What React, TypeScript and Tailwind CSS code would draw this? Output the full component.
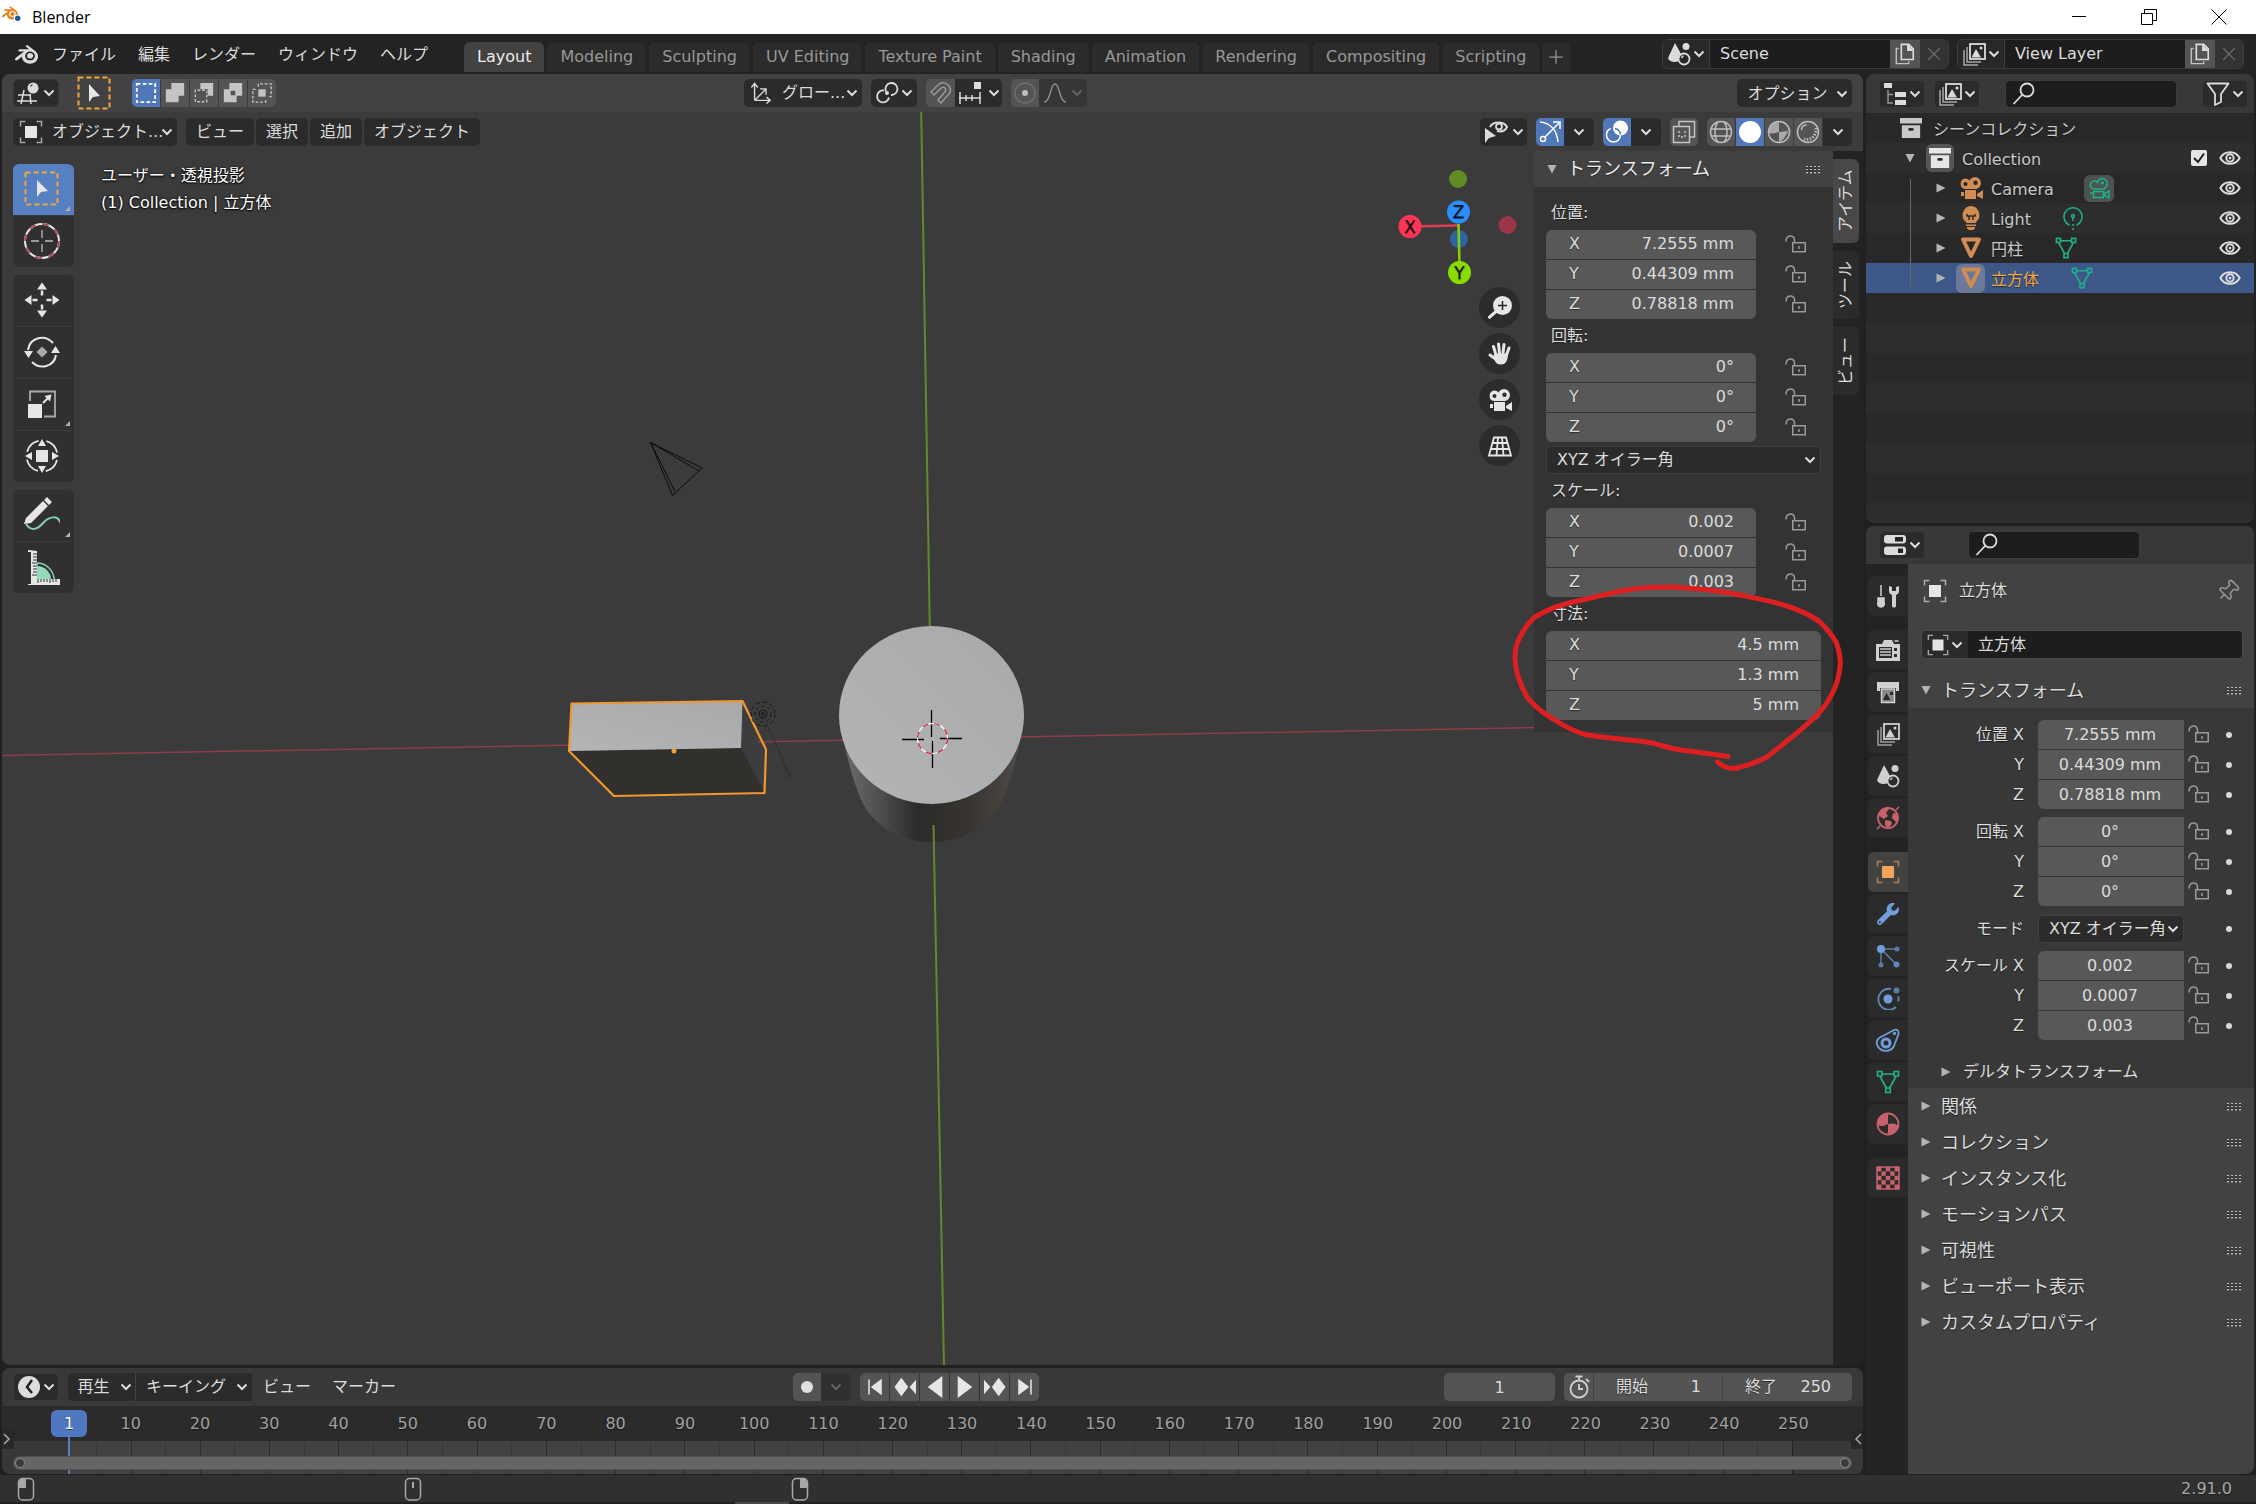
import React from 'react';
import { Pin } from 'lucide-react';
import { FaWrench } from 'react-icons/fa';
import { SiBlender } from 'react-icons/si';

type IconProps = { className?: string; children?: React.ReactNode };

const Icon: React.FC<IconProps> = ({ className = 'size-6', children }) => (
  <svg viewBox="0 0 24 24" className={`${className} shrink-0`} fill="none" stroke="currentColor" strokeWidth="1.5" aria-hidden="true">
    {children}
  </svg>
);

const ToolIcon: React.FC<IconProps> = ({ children }) => (
  <svg viewBox="0 0 36 36" className="size-9" fill="none" stroke="#e6e6e6" strokeWidth="2" aria-hidden="true">
    {children}
  </svg>
);

const Chevron = ({ className = '' }: { className?: string }) => (
  <svg viewBox="0 0 12 8" className={`w-3 h-2 shrink-0 ${className}`} fill="none" stroke="currentColor" strokeWidth="2" aria-hidden="true">
    <path d="M1.5 1.5 6 6l4.5-4.5" />
  </svg>
);

const Grip = () => (
  <svg viewBox="0 0 16 9" className="w-4 h-[9px] shrink-0" aria-hidden="true">
    {[0, 1, 2, 3].map((i) => (
      <g key={i}>
        <rect x={i * 4 + 1} y="1" width="2" height="1.4" fill="#c0c0c0" />
        <rect x={i * 4 + 1} y="2.4" width="2" height="1" fill="#161616" />
        <rect x={i * 4 + 1} y="4" width="2" height="1.4" fill="#c0c0c0" />
        <rect x={i * 4 + 1} y="5.4" width="2" height="1" fill="#161616" />
        <rect x={i * 4 + 1} y="7" width="2" height="1.4" fill="#c0c0c0" />
      </g>
    ))}
  </svg>
);

const Triangle = ({ open = false }: { open?: boolean }) => (
  <svg viewBox="0 0 10 10" className="size-2.5 shrink-0" fill="#b4b4b4" aria-hidden="true">
    {open ? <path d="M.5 1h9L5 9.5z" /> : <path d="M.5.5v9L9.5 5z" />}
  </svg>
);

const Lock = () => (
  <svg viewBox="0 0 22 18" className="w-[22px] h-[18px]" fill="none" stroke="#9a9a9a" strokeWidth="1.5" aria-hidden="true">
    <path d="M1 6.500C1-.5 9.500-.5 9.500 5v3" />
    <rect x="7.750" y="7.750" width="12.500" height="9" />
    <path d="M14 11v3" />
  </svg>
);

const EditorIcon = () => (
  <Icon>
    <path d="M1 14h13M0 20h20M7 9 4 23M13 13l1 10" />
    <circle cx="16" cy="7" r="5.500" fill="currentColor" stroke="none" />
    <path d="M13.500 5.500a3 3 0 0 1 2-2" stroke="#2b2b2b" strokeWidth="1.300" />
  </Icon>
);

const ObjectIcon = ({ fill = '#e6e6e6', className = 'size-6' }: { fill?: string; className?: string }) => (
  <Icon className={className}>
    <rect x="6" y="6" width="12" height="12" fill={fill} stroke="none" />
    <path d="M1.500 6.500v-5h5M17.500 1.500h5v5M22.500 17.500v5h-5M6.500 22.500h-5v-5" opacity=".7" />
  </Icon>
);

const SceneIcon = () => (
  <Icon>
    <path d="M8 1 14 12c-2 2-3 4-2 7-4 2-10 1-11-3z" fill="currentColor" stroke="none" />
    <circle cx="19" cy="4.500" r="3.500" fill="currentColor" stroke="none" />
    <circle cx="17" cy="17" r="5.500" strokeWidth="1.800" />
    <path d="M14.500 16a3 3 0 0 1 2-2" />
  </Icon>
);

const LayersIcon = () => (
  <Icon>
    <rect x="8" y="2" width="15" height="15" strokeWidth="1.800" />
    <path d="M9.500 15.500 14 7l5 8.500z" fill="currentColor" stroke="none" />
    <circle cx="19" cy="6" r="1.500" fill="currentColor" stroke="none" />
    <path d="M5 5v15h14M2 8v15h14" opacity=".7" />
  </Icon>
);

const SearchIcon = () => (
  <Icon className="size-6">
    <circle cx="15" cy="8" r="6.500" strokeWidth="1.800" />
    <path d="m10.500 12.500-9 9.500" strokeWidth="1.800" />
  </Icon>
);

const NewIcon = () => (
  <Icon className="size-[22px]">
    <path d="M8 1.500h8l5 5V18H8z" strokeWidth="1.800" />
    <path d="M15 1.500V8h6" fill="currentColor" />
    <path d="M5 6H2.500v16.500H16V20" opacity=".8" />
  </Icon>
);

const BoxIcon = () => (
  <Icon className="size-[22px]">
    <path d="M0 1h24v6H0zM2 9h20v14H2z" fill="currentColor" stroke="none" />
    <rect x="9" y="12" width="6" height="3" rx="1.500" fill="#2b2b2b" stroke="none" />
  </Icon>
);

const CameraIcon = ({ className = 'size-6' }: { className?: string }) => (
  <Icon className={className}>
    <path fillRule="evenodd" stroke="none" fill="currentColor" d="M6.500 2.500a5 5 0 0 1 4 2 6 6 0 1 1 6.500 8.500H6a5.300 5.300 0 0 1 .5-10.500zM6.500 6a2 2 0 1 0 0 4 2 2 0 0 0 0-4zM16.500 4.500a2.200 2.200 0 1 0 0 4.400 2.200 2.200 0 0 0 0-4.400z" />
    <path d="M6 14h11v9H6zM18 18l6-4v9l-6-3zM2 16h3v4H2z" fill="currentColor" stroke="none" />
  </Icon>
);

const CameraDataIcon = () => (
  <Icon>
    <path d="M7 13a4 4 0 1 1 3.500-6.500 5 5 0 1 1 8 5L17 13zM6.500 15.500h10v6h-10zM17 18l5-3v7l-5-3M3 17h3" />
    <circle cx="15.500" cy="7" r=".8" />
  </Icon>
);

const MeshIcon = () => (
  <Icon>
    <path d="M4 3.500h16L12 20z" strokeWidth="4" strokeLinejoin="round" />
  </Icon>
);

const MeshDataIcon = ({ className = 'size-6' }: { className?: string }) => (
  <Icon className={className}>
    <path d="M6 4h12M4 6.500 10.500 18M20 6.500 13.500 18" strokeWidth="1.700" />
    <path d="M1.500 1.500H6v4.500H1.500zM18 1.500h4.500V6H18zM9.750 18h4.500v4.500h-4.500z" strokeWidth="1.700" />
  </Icon>
);

const EyeIcon = () => (
  <Icon className="size-[22px]">
    <path d="M1.500 12C6 3.500 18 3.500 22.500 12 18 20.500 6 20.500 1.500 12z" strokeWidth="2.200" />
    <circle cx="12" cy="12" r="4" strokeWidth="2.200" />
    <circle cx="12" cy="12" r="1.500" fill="currentColor" stroke="none" />
  </Icon>
);

const btn = 'flex items-center justify-center bg-[#2b2b2b] h-7 rounded-[5px] text-[#dcdcdc]';

const IconMenu = ({ label, children }: { label: string; children: React.ReactNode }) => (
  <button type="button" aria-label={label} className={`${btn} w-[46px] gap-0.5 border border-[#383838]`}>
    {children}
    <Chevron />
  </button>
);

const SelectBox = ({ label, value, className }: { label: string; value: string; className: string }) => (
  <div className="relative flex items-center">
    <select aria-label={label} defaultValue={value} className={`appearance-none h-full outline-none bg-transparent ${className}`}>
      <option>{value}</option>
    </select>
    <Chevron className="absolute right-1 pointer-events-none" />
  </div>
);

const menus = ['ファイル', '編集', 'レンダー', 'ウィンドウ', 'ヘルプ'];
const workspaces = ['Layout', 'Modeling', 'Sculpting', 'UV Editing', 'Texture Paint', 'Shading', 'Animation', 'Rendering', 'Compositing', 'Scripting'];

const TitleBar = () => (
  <header className="flex items-center h-[34px] bg-white text-black [text-shadow:none]">
    <svg viewBox="0 0 24 24" className="size-6 ml-0.5" aria-hidden="true">
      <SiBlender width="24" height="24" color="#e8811a" />
      <circle cx="15.700" cy="13.300" r="3.900" fill="#fff" />
      <circle cx="15.700" cy="13.300" r="2.700" fill="#1d5a9c" />
    </svg>
    <span className="ml-1.5 text-base font-['Open_Sans',sans-serif]">Blender</span>
    <div className="ml-auto flex items-center pr-0.5">
      <button type="button" aria-label="最小化" className="w-[70px] flex justify-center">
        <svg viewBox="0 0 16 16" className="size-4" stroke="#000" fill="none"><path d="M1 7.500h14" /></svg>
      </button>
      <button type="button" aria-label="元に戻す" className="w-[70px] flex justify-center">
        <svg viewBox="0 0 16 16" className="size-4" stroke="#000" fill="none"><path d="M.5 4.500h11v11H.5zM3.500 4V.5h12v11H12" /></svg>
      </button>
      <button type="button" aria-label="閉じる" className="w-[70px] flex justify-center">
        <svg viewBox="0 0 16 16" className="size-4" stroke="#000" fill="none"><path d="m.5.5 15 15M15.500.5l-15 15" /></svg>
      </button>
    </div>
  </header>
);

const DataBlock = ({ name, icon }: { name: string; icon: React.ReactNode }) => (
  <div className="flex h-[30px] w-[287px] rounded-md border border-[#3d3d3d] overflow-hidden text-[#dcdcdc]">
    <button type="button" aria-label={`${name} 選択`} className="w-[46px] flex items-center justify-center gap-0.5 bg-[#282828]">
      {icon}
      <Chevron />
    </button>
    <input aria-label={name} defaultValue={name} className="flex-1 min-w-0 bg-[#1d1d1d] border-l border-[#3d3d3d] pl-2.5 outline-none" />
    <button type="button" aria-label="新規" className="w-[30px] flex items-center justify-center bg-[#545454]"><NewIcon /></button>
    <button type="button" aria-label="削除" className="w-7 flex items-center justify-center bg-[#333] text-[#707070]">
      <Icon className="size-5"><path d="m5 5 14 14M19 5 5 19" /></Icon>
    </button>
  </div>
);

const TopBar = () => (
  <div className="flex h-10 bg-[#232323] pl-[15px] pr-3">
    <div className="flex items-center h-10">
      <SiBlender className="size-[23px] text-[#dcdcdc]" />
      <nav className="flex gap-[22px] ml-3.5 pt-0.5">
        {menus.map((m) => <button type="button" key={m}>{m}</button>)}
      </nav>
    </div>
    <div className="flex gap-[3px] items-end pb-0.5 ml-9">
      {workspaces.map((w, i) => (
        <button
          type="button"
          key={w}
          className={`h-[30px] px-[13px] rounded-t-md ${i === 0 ? 'bg-[#424242] text-[#ececec]' : 'bg-[#2b2b2b] text-[#989898]'}`}
        >
          {w}
        </button>
      ))}
      <button type="button" aria-label="追加" className="h-[30px] w-7 flex items-center justify-center rounded-t-md bg-[#2b2b2b] text-[#989898]">
        <Icon className="size-5"><path d="M12 4v16M4 12h16" /></Icon>
      </button>
    </div>
    <div className="ml-auto flex gap-2 pt-[5px]">
      <DataBlock name="Scene" icon={<SceneIcon />} />
      <DataBlock name="View Layer" icon={<LayersIcon />} />
    </div>
  </div>
);

const selectModes = [
  <rect x="2" y="2" width="20" height="20" strokeDasharray="4 2.500" key="a" strokeWidth="2" />,
  <path d="M8 1h14v14h-6v7H2V8h6z" fill="#c4c4c4" stroke="none" key="b" />,
  <g key="c"><path d="M8 1h14v14h-6V8H8z" fill="#c4c4c4" stroke="none" /><path d="M13 9H2.500v12.500H15V10" strokeDasharray="3 2" /></g>,
  <path key="d" d="M8 1h14v14h-6v7H2V8h6zM9.500 9.500v5h5v-5z" fillRule="evenodd" fill="#c4c4c4" stroke="none" />,
  <g key="e"><rect x="8" y="8" width="8" height="8" fill="#c4c4c4" stroke="none" /><path d="M8 5V2h14v14h-3M5 8H2v14h14v-3" strokeDasharray="3 2" /></g>,
];

const ToolHeader = () => (
  <div className="relative flex h-[38px] items-center bg-[#424242] pl-[11px] pr-[11px]">
    <IconMenu label="エディタータイプ"><EditorIcon /></IconMenu>
    <svg viewBox="0 0 34 34" className="size-[34px] ml-[18px]" fill="none" aria-hidden="true">
      <rect x="1.500" y="1.500" width="31" height="31" stroke="#f0a63c" strokeWidth="2" strokeDasharray="5 3" />
      <path d="M12 8v18l4-5 7-1z" fill="#e6e6e6" />
    </svg>
    <div className="flex gap-px ml-[21px] h-7 rounded-[5px] overflow-hidden bg-[#3a3a3a] text-[#c4c4c4]">
      {selectModes.map((m, i) => (
        <button type="button" key={i} aria-label={`選択モード ${i + 1}`} className={`w-7 flex items-center justify-center ${i === 0 ? 'bg-[#5078b8] text-white' : 'bg-[#545454]'}`}>
          <Icon className="size-[22px]">{m}</Icon>
        </button>
      ))}
    </div>
    <div className="grow-18" />
    <div className="flex gap-[9px] h-7">
      <div className="flex items-center rounded-[5px] bg-[#2b2b2b] pl-1.5">
        <Icon className="size-[22px]"><path d="M5 20V2M1.500 6 5 1.500 8.500 6M5 20h17M18 16.500l4 3.500-4 3.500M6 19 17 8M11 7.500h6.500V14" /></Icon>
        <SelectBox label="座標系" value="グロー..." className="w-[90px] pl-2.5" />
      </div>
      <button type="button" aria-label="ピボットポイント" className={`${btn} w-[46px] gap-0.5`}>
        <Icon>
          <path d="M9 9.500a6 6 0 1 0 5 7M11 10.500a6 6 0 1 1 5 3.500" strokeWidth="1.800" />
          <circle cx="12" cy="12" r="2" fill="currentColor" stroke="none" />
        </Icon>
        <Chevron />
      </button>
      <div className="flex rounded-[5px] overflow-hidden">
        <button type="button" aria-label="スナップ" className="w-[29px] bg-[#545454] text-[#999] flex items-center justify-center">
          <Icon><path d="m2 11 7-7c4-4 9-2 11 1s2 7-2 10l-6 7-3-3 6-7c2-2 2-4 1-5s-3-1-5 1l-6 6z" /></Icon>
        </button>
        <button type="button" aria-label="スナップ先" className="w-[47px] bg-[#2b2b2b] flex items-center justify-center gap-1.5">
          <Icon><path d="M1 17h22M2 11v12M8 14v6M14 14v6M22 11v12" /><path d="M16 1h7v7h-7z" fill="currentColor" stroke="none" /></Icon>
          <Chevron />
        </button>
      </div>
      <div className="flex rounded-[5px] overflow-hidden">
        <button type="button" aria-label="プロポーショナル編集" className="w-7 bg-[#545454] flex items-center justify-center">
          <Icon><circle cx="12" cy="12" r="10" stroke="#6e6e6e" /><circle cx="12" cy="12" r="3" fill="#bcbcbc" stroke="none" /></Icon>
        </button>
        <button type="button" aria-label="減衰" className="w-12 bg-[#363636] text-[#8c8c8c] flex items-center justify-center gap-1">
          <Icon><path d="M1 21c7 0 6-18 11-18s4 18 11 18" /></Icon>
          <Chevron className="opacity-50" />
        </button>
      </div>
    </div>
    <div className="grow-25" />
    <button type="button" className={`${btn} w-[115px] gap-2 pl-1.5 pt-px`}>オプション<Chevron /></button>
  </div>
);

const shadings = [
  <g key="w"><circle cx="12" cy="12" r="10.500" /><path d="M2 9h20M2 16h20M9 2c-4 5-4 15 0 20M15 2c4 5 4 15 0 20" /></g>,
  <circle key="s" cx="12" cy="12" r="11" fill="#fff" stroke="none" />,
  <g key="m"><circle cx="12" cy="12" r="10.500" /><path d="M12 12V2A10 10 0 0 0 2 13c3 1 7 0 10-1zM12 12l9-1c-2 6-6 10-9 11z" fill="#bdbdbd" stroke="none" opacity=".8" /></g>,
  <g key="r"><circle cx="12" cy="12" r="10.500" /><path d="M5.500 10c0-3 2-5 5-5" /><path d="M20 8c1 7-5 13-12 11" strokeWidth="3" strokeDasharray="1.500 1.500" /></g>,
];

const ViewHeader = () => (
  <div className="relative flex h-[39px] items-start pt-1.5 px-[11px]">
    <div className={`${btn} pl-1.5 w-[164px]`}>
      <ObjectIcon />
      <SelectBox label="モード" value="オブジェクト..." className="w-[134px] pl-[9px]" />
    </div>
    <div className="flex gap-0.5 ml-[9px]">
      {['ビュー', '選択', '追加', 'オブジェクト'].map((m) => (
        <button type="button" key={m} className={`${btn} px-[10px]`}>{m}</button>
      ))}
    </div>
    <div className="ml-auto flex gap-[9px] h-7">
      <button type="button" aria-label="オブジェクトの表示" className={`${btn} w-[47px] gap-1`}>
        <Icon>
          <path d="M6 7c3-6 14-6 17 0-2 4-6 5-10 4" strokeWidth="2" />
          <circle cx="15" cy="6.500" r="3" strokeWidth="1.800" />
          <path d="M1 8v15l4-5 7-2z" fill="currentColor" stroke="none" />
        </Icon>
        <Chevron />
      </button>
      <div className="flex rounded-[5px] overflow-hidden">
        <button type="button" aria-label="ギズモ" className="w-7 bg-[#5078b8] text-white flex items-center justify-center">
          <Icon><path d="M2 2c11 1 17 9 18 20M7 17 21 3M15 2h7v7" /><circle cx="5" cy="19" r="2.500" /></Icon>
        </button>
        <button type="button" aria-label="ギズモ設定" className="w-[30px] bg-[#2b2b2b] flex items-center justify-center"><Chevron /></button>
      </div>
      <div className="flex rounded-[5px] overflow-hidden">
        <button type="button" aria-label="オーバーレイ" className="w-7 bg-[#5078b8] text-white flex items-center justify-center">
          <Icon><circle cx="15.500" cy="8" r="7.500" fill="currentColor" stroke="none" /><circle cx="8.500" cy="15" r="7" strokeDasharray="30 3" /><path d="M10 8.500a7 7 0 0 1 5.500 6" stroke="#5078b8" /></Icon>
        </button>
        <button type="button" aria-label="オーバーレイ設定" className="w-[30px] bg-[#2b2b2b] flex items-center justify-center"><Chevron /></button>
      </div>
      <button type="button" aria-label="透過表示" className="w-7 rounded-[5px] bg-[#545454] text-[#c4c4c4] flex items-center justify-center">
        <Icon><path d="M1.500 6.500h16v16h-16zM7 6V1.500h15.500V17H18" /><path d="M7 11v6h6v-6" strokeDasharray="2 2" /></Icon>
      </button>
      <div className="flex gap-px rounded-[5px] overflow-hidden bg-[#3a3a3a]">
        {shadings.map((s, i) => (
          <button type="button" key={i} aria-label={`シェーディング ${i + 1}`} className={`w-7 flex items-center justify-center text-[#bdbdbd] ${i === 1 ? 'bg-[#5078b8]' : 'bg-[#545454]'}`}>
            <Icon>{s}</Icon>
          </button>
        ))}
        <button type="button" aria-label="シェーディング設定" className="w-[29px] bg-[#2b2b2b] flex items-center justify-center"><Chevron /></button>
      </div>
    </div>
  </div>
);

// 3D scene, drawn in window coordinates and shifted to the viewport origin
const Scene3D = () => (
  <svg className="absolute inset-0 size-full" fill="none" aria-hidden="true">
    <defs>
      <linearGradient id="side" x1="0" x2="1">
        <stop offset="0" stopColor="#6c6c6c" />
        <stop offset=".2" stopColor="#505050" />
        <stop offset=".42" stopColor="#2c2b2a" />
        <stop offset=".7" stopColor="#37342f" />
        <stop offset="1" stopColor="#504a47" />
      </linearGradient>
      <linearGradient id="top" x1="0" y1="1" x2="1" y2="0">
        <stop offset="0" stopColor="#b2b4b6" />
        <stop offset="1" stopColor="#a8a9ab" />
      </linearGradient>
    </defs>
    <g transform="translate(-2 -74)">
      <path d="M0 755.500 1540 727.500" stroke="#8c3c4a" strokeWidth="1.500" />
      <path d="M921 100 930 640" stroke="#62892f" strokeWidth="2" />
      <g stroke="#0c0c0c">
        <path d="M650.500 442.500 702 468 672.500 495.500zM650.500 442.500 699 471M650.500 442.500 675 491.500" />
      </g>
      <g>
        <path d="m742.500 701-2 47 24 45 1.500-43.500z" fill="#3d3c3e" />
        <path d="m569 751 172-3 24 45-151 3z" fill="#32302c" />
        <path d="m571.500 704 171-3-1.500 47-172 3z" fill="url(#top)" />
        <path d="m758 741.700 8 0" stroke="#8c3c4a" strokeWidth="1.500" />
        <path d="m571.500 703.500 171-2.500 23.500 48.500-1.500 43.500-150.500 3-45-45z" stroke="#f0982f" strokeWidth="2.200" strokeLinejoin="round" />
        <circle cx="674" cy="751" r="2.500" fill="#f0a030" />
      </g>
      <g stroke="#151515">
        <circle cx="763" cy="714" r="4" />
        <circle cx="763" cy="714" r="1.500" />
        <circle cx="763" cy="714" r="8" strokeDasharray="3 3" />
        <circle cx="763" cy="714" r="12" strokeDasharray="4 3" />
        <path d="m768 727 22 49" stroke="#2c2c2c" />
        <circle cx="790" cy="776" r="1" stroke="#2c2c2c" />
      </g>
      <path d="M843 736C847 758 852 776 858 792 868 823 898 842 932 842S995 822 1006 792C1012 776 1017 758 1021 736z" fill="url(#side)" />
      <ellipse cx="931.500" cy="715" rx="92.500" ry="89" fill="url(#top)" />
      <path d="M933.500 825 944 1366" stroke="#62892f" strokeWidth="2" />
      <path d="M931.500 710v27M932.500 741v27M902 739.500h22M940 738.500h22" stroke="#000" strokeWidth="1.300" />
      <circle cx="932.500" cy="738.500" r="15" stroke="#fff" strokeWidth="1.300" />
      <circle cx="932.500" cy="738.500" r="15" stroke="#d3223f" strokeWidth="1.300" strokeDasharray="6 6" />
    </g>
  </svg>
);

const tri = 'M34 29v5h-5z';
const toolGroups = [
  [
    <ToolIcon key="select"><rect x="1.500" y="1.500" width="32" height="32" stroke="#f0a63c" strokeDasharray="5 3.200" /><path d="M13 9v17l4-5 7-1z" fill="#e6e6e6" stroke="none" /></ToolIcon>,
    <ToolIcon key="cursor"><circle cx="18" cy="18" r="17" /><circle cx="18" cy="18" r="17" stroke="#a8505a" strokeDasharray="6.700 6.600" /><path d="M18 7v8M18 21v8M7 18h8M21 18h8" stroke="#bbb" strokeWidth="1.300" /></ToolIcon>,
  ],
  [
    <ToolIcon key="move"><path d="M18 .500l5 7H13zM18 35.500l5-7H13zM.500 18l7-5v10zM35.500 18l-7-5v10z" fill="#e6e6e6" stroke="none" /><path d="M18 8.500v5M18 22.500v5M8.500 18h5M22.500 18h5" strokeWidth="2.500" /></ToolIcon>,
    <ToolIcon key="rotate"><path d="M4 16C6 3 21 0 29 9M32 21C30 33 16 36 8 28" /><path d="M0 17h9l-4.500 7zM27 19h9l-4.500-7z" fill="#e6e6e6" stroke="none" /><path d="m18 12.500 5.500 5.500-5.500 5.500-5.500-5.500z" fill="#aaa" stroke="none" /></ToolIcon>,
    <ToolIcon key="scale"><path d="M6 15V5.500h25v25H20" stroke="#aaa" strokeWidth="1.800" /><path d="M4 18h14v14H4z" fill="#e6e6e6" stroke="none" /><path d="m19 17 6-6" /><path d="m27.500 8.500-1.500 7-5.500-5.500z" fill="#e6e6e6" stroke="none" /></ToolIcon>,
    <ToolIcon key="transform"><circle cx="18" cy="18" r="15.500" strokeDasharray="16.300 8.050" strokeDashoffset="-4" strokeWidth="1.800" /><path d="M12 12h12v12H12z" fill="#e6e6e6" stroke="none" /><path d="m18 1 4 7h-8zM18 35l4-7h-8zM1 18l7-4v8zM35 18l-7-4v8z" fill="#e6e6e6" stroke="none" /></ToolIcon>,
  ],
  [
    <ToolIcon key="annotate"><path d="M2 27c6 9 13 4 18-2 5-5 14-8 17 2" stroke="#84cfae" /><path d="m0 27 2-6L19 4l5 5L7 26zM20 3l3-3 5 5-3 3z" fill="#e6e6e6" stroke="none" /></ToolIcon>,
    <ToolIcon key="measure"><path d="M13 14a17 17 0 0 1 17 17H13z" stroke="#84cfae" strokeWidth="1.500" /><path d="M13 17a14 14 0 0 1 14 14H13z" fill="#94dab8" stroke="none" /><path d="M5 2h8v28h23v6H4v-1h3V3H4V1h9" fill="#e6e6e6" stroke="none" /><path d="M13 5h-4M13 8h-4M13 11h-4M13 14h-5M13 17h-4M13 20h-4M13 23h-4M13 26h-5M14 30v4M17 30v3M20 30v3M23 30v3M26 30v4M29 30v3M32 30v3" stroke="#303030" strokeWidth="1" /></ToolIcon>,
  ],
];
const toolNames = [['ボックス選択', 'カーソル'], ['移動', '回転', 'スケール', 'トランスフォーム'], ['アノテート', 'メジャー']];
const expandable = ['ボックス選択', 'スケール', 'アノテート'];

const Toolbar = () => (
  <div className="flex flex-col gap-2 pt-[13px] pl-[11px]">
    {toolGroups.map((g, gi) => (
      <div key={gi} className="flex flex-col gap-px w-[61px] rounded-md overflow-hidden">
        {g.map((t, i) => (
          <button
            type="button"
            key={i}
            aria-label={toolNames[gi][i]}
            className={`relative h-[51px] pr-[3px] pb-0.5 flex items-center justify-center ${gi === 0 && i === 0 ? 'bg-[#5680c2]' : 'bg-[#303030]'}`}
          >
            {t}
            {expandable.includes(toolNames[gi][i]) && (
              <svg viewBox="28 28 6 6" className="absolute right-1 bottom-1 size-1.5" fill="#b0b0b0"><path d={tri} /></svg>
            )}
          </button>
        ))}
      </div>
    ))}
  </div>
);

const Gizmo = () => (
  <svg viewBox="1396 166 124 121" className="w-[124px] h-[121px]" fill="none" fontSize="17" textAnchor="middle" aria-hidden="true">
    <circle cx="1458" cy="179" r="9" fill="#628b21" />
    <circle cx="1507.500" cy="225" r="9" fill="#9b3647" />
    <circle cx="1459" cy="239" r="9" fill="#2f65a0" />
    <path d="M1410 226.500 1459 225.500" stroke="#e23c55" strokeWidth="2.500" />
    <path d="M1458.500 224 1459.500 265" stroke="#85d00a" strokeWidth="2.500" />
    <circle cx="1458.500" cy="212" r="11.500" fill="#2c8fff" />
    <circle cx="1410" cy="226.500" r="11.500" fill="#ff3653" />
    <circle cx="1459.500" cy="272.500" r="11.500" fill="#8adb00" />
    <g fill="#111">
      <text x="1458.500" y="218">Z</text>
      <text x="1410" y="232.500">X</text>
      <text x="1459.500" y="278.500">Y</text>
    </g>
  </svg>
);

const navButtons = [
  { label: 'ズーム', icon: <Icon><circle cx="14.500" cy="9.500" r="9.500" fill="#e6e6e6" stroke="none" /><path d="m8.500 15-8 7" strokeWidth="3" /><path d="M14.500 5v9M10 9.500h9" stroke="#222" /></Icon> },
  { label: '移動', icon: <Icon><path d="M8 13 5.500 4.500M11.500 11 10.500 2M15 11l1-8.500M18.500 13 21 6M9 18l-7-5" strokeWidth="3" strokeLinecap="round" /><path d="m6.500 11.500 13.500 0c0 8-3 11-7 11-5 0-6-3-7.500-7z" fill="#e6e6e6" stroke="none" /></Icon> },
  { label: 'カメラ', icon: <CameraIcon /> },
  { label: '透視投影', icon: <Icon><path d="M6 3.500h12l5 18H1zM4.500 9h15M3 15h18M10 3.500 8.500 21M14 3.500 15.500 21" strokeWidth="1.800" /></Icon> },
];

const NumberStack = ({ title, values, unitWide = false }: { title: string; values: string[]; unitWide?: boolean }) => (
  <fieldset className="flex flex-col">
    <legend className="h-[34px] leading-[34px] pl-[5px]">{title}:</legend>
    <div className="flex justify-between pr-[3px]">
      <div className={`flex flex-col gap-px rounded-md overflow-hidden ${unitWide ? 'w-full' : 'w-[210px]'}`}>
        {values.map((v, i) => (
          <label key={i} className="flex items-center h-[29px] bg-[#585858] pl-[23px] pr-[22px] pb-0.5">
            {'XYZ'[i]}
            <input defaultValue={v} className="flex-1 min-w-0 text-right outline-none bg-transparent" />
          </label>
        ))}
      </div>
      {!unitWide && (
        <div className="flex flex-col gap-px mr-3.5">
          {values.map((_, i) => (
            <button type="button" key={i} aria-label={`${title} ${'XYZ'[i]} ロック`} className="h-[29px] pb-0.5 flex items-center"><Lock /></button>
          ))}
        </div>
      )}
    </div>
  </fieldset>
);

const SidePanel = () => (
  <aside className="w-[299px] shrink-0">
    <h2 className="flex items-center h-9 bg-[#424242] pl-[13px] pr-3 text-lg text-[#ececec]">
      <Triangle open />
      <span className="ml-2.5">トランスフォーム</span>
      <span className="ml-auto"><Grip /></span>
    </h2>
    <div className="bg-[#333] pl-3 pr-[9px] pt-[9px] pb-3">
      <NumberStack title="位置" values={['7.2555 mm', '0.44309 mm', '0.78818 mm']} />
      <NumberStack title="回転" values={['0°', '0°', '0°']} />
      <div className="flex h-7 mt-1 mr-[3px] rounded-[5px] bg-[#2b2b2b] border border-[#404040] [&>div]:w-full">
        <SelectBox label="回転モード" value="XYZ オイラー角" className="w-full pl-2.5" />
      </div>
      <NumberStack title="スケール" values={['0.002', '0.0007', '0.003']} />
      <NumberStack title="寸法" values={['4.5 mm', '1.3 mm', '5 mm']} unitWide />
    </div>
  </aside>
);

const SideTabs = () => (
  <div className="flex flex-col gap-2 w-[30px] shrink-0 bg-[#232323] pt-2 pr-1">
    {['アイテム', 'ツール', 'ビュー'].map((t, i) => (
      <button
        type="button"
        key={t}
        className={`[writing-mode:vertical-rl] rotate-180 rounded-l-md flex items-center justify-center text-[#dcdcdc] ${
          i === 0 ? 'h-[84px] bg-[#484848]' : 'h-[68px] bg-[#2b2b2b]'
        }`}
      >
        <span className="[text-orientation:sideways]">{t}</span>
      </button>
    ))}
  </div>
);

const Annotation = () => (
  <svg className="absolute right-0 top-0 w-[363px] h-[720px] pointer-events-none" viewBox="1500 74 363 720" fill="none" stroke="#dd1f22" strokeLinecap="round" strokeLinejoin="round" aria-hidden="true">
    <path strokeWidth="5" d="M1728 756.500C1712 754 1697 752 1680 750 1668 748 1659 744 1647 742 1626 739 1606 738 1587 735 1575 732 1564 726 1553 719 1543 713 1534 706 1527 697 1520 684 1515 672 1515 658 1515 650 1516 644 1520 637 1524 630 1528 622 1535 617 1548 609 1562 604 1577 601 1596 597 1614 592 1633 589 1646 587 1660 587 1673 587 1692 588 1711 590 1730 593 1749 597 1768 600 1787 606 1799 610 1811 615 1820 622 1827 629 1832 635 1836 642 1839 650 1841 659 1840 667 1839 676 1837 684 1833 692 1829 700 1824 708 1817 715 1801 731 1784 743 1767 757 1759 761 1750 765 1740 767 1734 770 1728 768 1723 766L1717.500 762" />
  </svg>
);

const Viewport = () => (
  <section className="relative flex-1 flex flex-col rounded-lg overflow-hidden bg-[#3b3b3b]">
    <Scene3D />
    <ToolHeader />
    <ViewHeader />
    <div className="relative flex-1 flex">
      <Toolbar />
      <div className="ml-[27px] pt-[11px] leading-[27px] text-white [text-shadow:0_0_2px_#000,0_1px_2px_#000]">
        <p>ユーザー・透視投影</p>
        <p>(1) Collection | 立方体</p>
      </div>
      <div className="ml-auto flex flex-col items-end gap-[5px] pt-[15px] pr-3.5">
        <div className="-mb-[5px]"><Gizmo /></div>
        {navButtons.map((n) => (
          <button type="button" key={n.label} aria-label={n.label} className="size-[41px] rounded-full bg-[#2c2c2c] text-[#e6e6e6] flex items-center justify-center">
            {n.icon}
          </button>
        ))}
      </div>
      <SidePanel />
      <SideTabs />
    </div>
    <Annotation />
  </section>
);

const transport = [
  'M4 2v20M20 3v18L8 12z',
  'M8 2l7.500 10L8 22 .500 12zM24 4v16l-7-8z',
  'M20 0v24L4 12z',
  'M4 0v24l16-12z',
  'M16 2l7.500 10L16 22l-7.500-10zM0 4v16l7-8z',
  'M20 2v20M4 3v18l12-9z',
];
const frames = Array.from({ length: 25 }, (_, i) => (i + 1) * 10);

const Timeline = () => (
  <section className="relative rounded-lg overflow-hidden bg-[#383838]">
    <div className="flex items-center h-[38px] px-[11px] bg-[#383838]">
      <IconMenu label="タイムライン">
        <Icon><circle cx="12" cy="12" r="11" fill="currentColor" stroke="none" /><path d="M15 5 10 12l5 6" stroke="#222" strokeWidth="2.500" /></Icon>
      </IconMenu>
      <div className="flex gap-px ml-[9px] h-7 rounded-l-[5px] overflow-hidden bg-[#444]">
        <button type="button" className="w-[67px] flex items-center justify-center gap-2.5 bg-[#2b2b2b] pl-1.5">再生<Chevron /></button>
        <button type="button" className="w-[116px] flex items-center justify-center gap-2.5 bg-[#2b2b2b] pl-1.5">キーイング<Chevron /></button>
      </div>
      <button type="button" className="ml-[11px]">ビュー</button>
      <button type="button" className="ml-[21px]">マーカー</button>
      <div className="flex-1" />
      <div className="flex h-7 rounded-[5px] overflow-hidden">
        <button type="button" aria-label="自動キー挿入" className="w-7 bg-[#545454] flex items-center justify-center"><span className="size-3 rounded-full bg-[#e0e0e0]" /></button>
        <button type="button" aria-label="自動キー設定" className="w-[30px] bg-[#303030] text-[#666] flex items-center justify-center"><Chevron /></button>
      </div>
      <div className="flex gap-px ml-[9px] mr-2 h-7 rounded-[5px] overflow-hidden bg-[#333]">
        {transport.map((d, i) => (
          <button type="button" key={i} aria-label={`再生操作 ${i + 1}`} className="w-[29px] bg-[#545454] flex items-center justify-center text-[#e6e6e6]">
            <Icon className={i === 0 || i === 5 ? 'size-[18px]' : 'size-[22px]'}><path d={d} fill="currentColor" stroke={i === 0 || i === 5 ? 'currentColor' : 'none'} strokeWidth="2" /></Icon>
          </button>
        ))}
      </div>
      <div className="flex-1" />
      <input aria-label="現在のフレーム" defaultValue="1" className="h-7 w-[111px] rounded-[5px] bg-[#545454] text-center outline-none" />
      <div className="flex gap-px ml-[9px] h-7 rounded-[5px] overflow-hidden bg-[#444]">
        <button type="button" aria-label="プレビュー範囲" className="w-[29px] bg-[#545454] text-[#d0d0d0] flex items-center justify-center">
          <Icon><circle cx="12" cy="14" r="8.500" strokeWidth="1.800" /><path d="M12 9v5h4M12 5V2M8.500 1.500h7M19 4l3 3" strokeWidth="1.800" /></Icon>
        </button>
        <label className="w-32 flex items-center bg-[#545454] pl-[22px] pr-[21px]">開始<input defaultValue="1" className="flex-1 min-w-0 text-right outline-none" /></label>
        <label className="w-[129px] flex items-center bg-[#545454] pl-[22px] pr-[21px]">終了<input defaultValue="250" className="flex-1 min-w-0 text-right outline-none" /></label>
      </div>
    </div>
    <div className="flex items-center h-[35px] bg-[#2b2b2b] pl-[94px] pr-[35px] text-[#a0a0a0]">
      {frames.map((f) => <span key={f} className="flex-1 text-center">{f}</span>)}
    </div>
    <div className="flex h-[33px] bg-[#383838] pl-[66px] pr-[70px]">
      <div className="w-7 bg-[#424242]" />
      {frames.map((f, i) => (
        <div key={f} className={`flex bg-[#424242] ${i === 24 ? 'grow basis-0 border-r border-[#222]' : 'grow-2 basis-0'}`}>
          <div className="flex-1 border-l border-[#3a3a3a]" />
          {i < 24 && <div className="flex-1 border-l border-[#2d2d2d]" />}
        </div>
      ))}
    </div>
    <div className="absolute left-[49px] top-[42px] flex flex-col items-center w-9">
      <span className="w-full h-[27px] leading-[27px] rounded-md bg-[#5078c0] text-center text-white">1</span>
      <span className="w-0.5 h-[37px] bg-[#5680c2]" />
    </div>
    <div className="absolute left-[11px] right-[11px] bottom-1 h-3.5 rounded-full bg-[#666] border border-[#505050] flex items-center justify-between px-px">
      <span className="size-2.5 rounded-full bg-[#3a3a3a] border border-[#888]" />
      <span className="size-2.5 rounded-full bg-[#3a3a3a] border border-[#888]" />
    </div>
    <svg viewBox="0 0 12 20" className="absolute left-0 top-[61px] w-3 h-5" fill="none"><rect width="12" height="20" fill="#282828" /><path d="m2 5 5 5-5 5" stroke="#aaa" strokeWidth="1.500" /></svg>
    <svg viewBox="0 0 12 20" className="absolute right-0 top-[61px] w-3 h-5" fill="none"><rect width="12" height="20" fill="#282828" /><path d="m10 5-5 5 5 5" stroke="#aaa" strokeWidth="1.500" /></svg>
  </section>
);

const sceneItems = [
  { name: 'Camera', icon: <CameraIcon />, data: <span className="ml-[30px] flex items-center justify-center w-[30px] h-[27px] rounded-md bg-[#4d5351]"><CameraDataIcon /></span> },
  {
    name: 'Light',
    icon: <Icon><path d="M12 0a9 9 0 0 1 5 16v1H7v-1a9 9 0 0 1 5-16zM7 18.500h10v1.500H7zM8 21h8v1.500l-2 1.500h-4l-2-1.500z" fill="currentColor" stroke="none" /><path d="M8 8v2h8V8M10 10v4M14 10v4" stroke="#2b2b2b" /></Icon>,
    data: <span className="ml-[30px]"><Icon><path d="M8.500 19a9 9 0 1 1 7 0M12 11v4M12 18v2M12 22v2" /><circle cx="12" cy="10" r="1.500" /></Icon></span>,
  },
  { name: '円柱', icon: <MeshIcon />, data: <span className="ml-8"><MeshDataIcon className="size-[22px]" /></span> },
  { name: '立方体', icon: <MeshIcon />, data: <span className="ml-8"><MeshDataIcon className="size-[22px]" /></span> },
];

const Outliner = () => (
  <section className="flex flex-col h-[449px] rounded-lg overflow-hidden bg-[#282828]">
    <div className="flex items-center h-[39px] pl-[13px] pr-1.5 bg-[#383838]">
      <IconMenu label="アウトライナー">
        <Icon><path d="M1 1h8v5H1zM12 10h11v5H12zM12 18h11v5H12z" fill="currentColor" stroke="none" /><path d="M5 8v13h5M5 12.500h5" opacity=".6" /></Icon>
      </IconMenu>
      <span className="ml-[9px]"><IconMenu label="表示モード"><LayersIcon /></IconMenu></span>
      <label className="ml-[25px] flex items-center w-[172px] h-7 rounded-[5px] bg-[#1d1d1d] border border-[#3d3d3d] pl-1.5">
        <SearchIcon />
        <input aria-label="検索" className="flex-1 min-w-0 outline-none" />
      </label>
      <span className="ml-auto">
        <IconMenu label="フィルター"><Icon><path d="M1.500 1.500h21L15 12v8l-6 3V12z" strokeWidth="1.800" strokeLinejoin="round" /></Icon></IconMenu>
      </span>
    </div>
    <ul className="relative text-[#c8c8c8]">
      <li className="flex items-center h-[30px] pl-[34px]"><BoxIcon /><span className="ml-[11px] pt-1">シーンコレクション</span></li>
      <li className="flex items-center h-[30px] pl-[39px] pr-[13px] bg-[#2d2d2d]">
        <Triangle open />
        <span className="ml-[11px] flex items-center justify-center size-7 rounded-md bg-[#555] text-[#e6e6e6]"><BoxIcon /></span>
        <span className="ml-2 pt-1">Collection</span>
        <label className="ml-auto">
          <input type="checkbox" aria-label="Collection" defaultChecked className="peer sr-only" />
          <svg viewBox="0 0 16 16" className="size-4" aria-hidden="true"><rect width="16" height="16" rx="2" fill="#e6e6e6" /><path d="m3 8 4 4 6-8.500" fill="none" stroke="#222" strokeWidth="2" /></svg>
        </label>
        <button type="button" aria-label="Collection 表示" className="ml-3 text-[#dcdcdc]"><EyeIcon /></button>
      </li>
      {sceneItems.map((s, i) => (
        <li
          key={s.name}
          className={`flex items-center h-[30px] pl-[70px] pr-[13px] ${i === 3 ? 'bg-[#3d5789] text-[#f5a83d]' : i % 2 ? 'bg-[#2d2d2d]' : ''}`}
        >
          <Triangle />
          <span className={`ml-2.5 flex items-center justify-center size-[29px] rounded-md text-[#d08c52] ${i === 3 ? 'bg-[#6b7a9b]' : ''}`}>{s.icon}</span>
          <span className="ml-1.5 pt-1">{s.name}</span>
          <span className="flex text-[#1fb08a]">{s.data}</span>
          <button type="button" aria-label={`${s.name} 表示`} className="ml-auto text-[#dcdcdc]"><EyeIcon /></button>
        </li>
      ))}
      <li aria-hidden="true" className="absolute left-11 top-[66px] w-px h-[108px] bg-[#666]" />
    </ul>
    <div className="flex-1 bg-[repeating-linear-gradient(#282828_0_30px,#2d2d2d_30px_60px)]" />
  </section>
);

const tabGroups = [
  [{ n: 'ツール', c: 'text-[#d0d0d0]', i: <Icon><path d="M5 1v11M2 14h6v4c1 2 0 5-3 5s-4-3-3-5z" fill="currentColor" /><path d="M13 2v5c0 2 1 3 3 4v11c0 2 4 2 4 0V11c2-1 3-2 3-4V2l-3 1v4h-4V3z" fill="currentColor" stroke="none" /></Icon> }],
  [
    { n: 'レンダー', c: 'text-[#d0d0d0]', i: <Icon><path fillRule="evenodd" d="M0 6h6l2-4h8l2 4h6v17H0zM3 9v11h13V9zM18 10v3h3v-3zM18 16v3h3v-3z" fill="currentColor" stroke="none" /><path d="M4 11h11M4 14h11M4 17h11" /><path d="M18.500 3h4" /></Icon> },
    { n: '出力', c: 'text-[#d0d0d0]', i: <Icon><path d="M1 2h22v9h-3V8H4v3H1z" fill="currentColor" stroke="none" /><rect x="5.500" y="9" width="13" height="13.500" fill="#888" /><path d="m7 20 3.500-7 4 7zM14 12h3v3h-3z" fill="#2b2b2b" stroke="none" /></Icon> },
    { n: 'ビューレイヤー', c: 'text-[#d0d0d0]', i: <LayersIcon /> },
    { n: 'シーン', c: 'text-[#d0d0d0]', i: <SceneIcon /> },
    { n: 'ワールド', c: 'text-[#c8616b]', i: <Icon><circle cx="12" cy="12" r="10" strokeWidth="1.800" /><path d="M5 4c4-3 7-3 8-1l-3 4 2 3-4 3-5-3zM17 7l5 1c1 4 0 6-2 8l-4-4zM9 14l6 1 1 3-4 4-3-3z" fill="currentColor" stroke="none" /><path d="M1 23l3-3M20 4l3-3" /></Icon> },
  ],
  [
    { n: 'オブジェクト', c: 'text-[#f09a4e]', i: <ObjectIcon fill="#f5a25a" /> },
    { n: 'モディファイアー', c: 'text-[#6f9edb]', i: <FaWrench className="size-[22px] -scale-x-100 rotate-90" /> },
    { n: 'パーティクル', c: 'text-[#6f9edb]', i: <Icon><circle cx="5" cy="5" r="4" fill="currentColor" stroke="none" /><path d="M8 5h11M5 8v11M7 7l12 12" opacity=".7" /><circle cx="21" cy="5" r="2.500" fill="currentColor" stroke="none" opacity=".7" /><circle cx="5" cy="21" r="2.500" fill="currentColor" stroke="none" opacity=".7" /><circle cx="20.500" cy="20.500" r="3" fill="currentColor" stroke="none" opacity=".8" /></Icon> },
    { n: '物理演算', c: 'text-[#6f9edb]', i: <Icon><circle cx="12" cy="13" r="4.500" fill="currentColor" stroke="none" /><circle cx="20.500" cy="4.500" r="3" fill="currentColor" stroke="none" opacity=".7" /><path d="M15 3a10.500 10.500 0 1 0 5 18" opacity=".8" strokeWidth="1.800" /><path d="M22.300 10.500a10.500 10.500 0 0 1 0 5" opacity=".8" strokeWidth="1.800" /></Icon> },
    { n: 'コンストレイント', c: 'text-[#6f9edb]', i: <Icon><path d="M3 10 17 2.500c4-2 6 0 5.500 3.500L18 18c-3 6-11 6-14.500 2.500S0 13 3 10z" strokeWidth="1.800" /><circle cx="10" cy="15" r="4" strokeWidth="3" /><circle cx="18.500" cy="5.500" r="1" /></Icon> },
    { n: 'データ', c: 'text-[#1fb08a]', i: <MeshDataIcon /> },
    { n: 'マテリアル', c: 'text-[#c8616b]', i: <Icon><circle cx="12" cy="12" r="10.500" strokeWidth="1.800" /><path d="M12 12V1.500A10.500 10.500 0 0 0 1.500 13c3 2 7 1 10.500-1zM12 12v10.500c6 0 10-5 10.500-9C19 11 15 11 12 12z" fill="currentColor" stroke="none" /></Icon> },
  ],
  [{
    n: 'テクスチャ', c: 'text-[#c8616b]', i: (
      <Icon>
        <rect x="1" y="1" width="22" height="22" />
        {[0, 1, 2, 3, 4].flatMap((r) => [0, 1, 2, 3, 4].filter((c) => (r + c) % 2 === 0).map((c) => (
          <rect key={`${r}${c}`} x={1 + c * 4.4} y={1 + r * 4.4} width="4.400" height="4.400" fill="currentColor" stroke="none" />
        )))}
      </Icon>
    ),
  }],
];

const PropRows = ({ title, values }: { title: string; values: string[] }) => (
  <div className="flex flex-col gap-px">
    {values.map((v, i) => (
      <div key={i} className="flex items-center h-[29px]">
        <label htmlFor={`${title}-${i}`} className="flex-1 text-right pr-3.5">{i === 0 ? `${title} ` : ''}{'XYZ'[i]}</label>
        <input
          id={`${title}-${i}`}
          defaultValue={v}
          className={`w-[146px] h-[29px] pb-px pr-0.5 bg-[#585858] text-center outline-none ${i === 0 ? 'rounded-tl-md' : ''} ${i === 2 ? 'rounded-bl-md' : ''}`}
        />
        <button type="button" aria-label={`${title} ${'XYZ'[i]} ロック`} className="w-[30px] h-[29px] pb-0.5 flex items-center justify-center"><Lock /></button>
        <span className="ml-3 size-1.5 rounded-full bg-[#d8d8d8]" />
      </div>
    ))}
  </div>
);

const closedPanels = ['関係', 'コレクション', 'インスタンス化', 'モーションパス', '可視性', 'ビューポート表示', 'カスタムプロパティ'];

const Properties = () => (
  <section className="flex-1 flex flex-col rounded-lg overflow-hidden bg-[#424242]">
    <div className="flex items-center h-[38px] pl-[13px] bg-[#383838]">
      <IconMenu label="プロパティ">
        <Icon><rect x="1" y="2" width="22" height="8.500" rx="3" fill="currentColor" stroke="none" /><rect x="1" y="13.500" width="22" height="8.500" rx="3" fill="currentColor" stroke="none" /><path d="M12 4h8v4.500h-8zM15 15.500h5v4.500h-5z" fill="#222" stroke="none" /></Icon>
      </IconMenu>
      <label className="ml-[43px] flex items-center w-[172px] h-7 rounded-[5px] bg-[#1d1d1d] border border-[#3d3d3d] pl-1.5">
        <SearchIcon />
        <input aria-label="プロパティ検索" className="flex-1 min-w-0 outline-none" />
      </label>
    </div>
    <div className="flex-1 flex">
      <div className="flex flex-col gap-3.5 w-[42px] shrink-0 bg-[#232323] pt-3 pl-0.5">
        {tabGroups.map((g, gi) => (
          <div key={gi} className="flex flex-col gap-0.5">
            {g.map((t) => (
              <button
                type="button"
                key={t.n}
                aria-label={t.n}
                className={`h-10 rounded-l-md flex items-center justify-center ${t.n === 'オブジェクト' ? 'bg-[#424242]' : 'bg-[#2b2b2b]'} ${t.c}`}
              >
                {t.i}
              </button>
            ))}
          </div>
        ))}
      </div>
      <div className="flex-1 min-w-0">
        <div className="flex items-center h-[54px] pl-[15px] pr-3.5">
          <ObjectIcon />
          <span className="ml-3">立方体</span>
          <button type="button" aria-label="ピン留め" className="ml-auto text-[#999]"><Pin className="size-6 rotate-45" strokeWidth={1.5} /></button>
        </div>
        <div className="flex h-[29px] mt-3 ml-[13px] mr-[11px] rounded-[5px] overflow-hidden border border-[#4a4a4a]">
          <button type="button" aria-label="オブジェクト選択" className="w-[46px] flex items-center justify-center gap-0.5 bg-[#2b2b2b]"><ObjectIcon className="size-[22px]" /><Chevron /></button>
          <input aria-label="名前" defaultValue="立方体" className="flex-1 min-w-0 pl-2.5 bg-[#1d1d1d] outline-none" />
        </div>
        <h2 className="flex items-center h-9 mt-[13px] pl-[13px] pr-3 text-lg">
          <Triangle open />
          <span className="ml-2.5 pt-px">トランスフォーム</span>
          <span className="ml-auto"><Grip /></span>
        </h2>
        <div className="flex flex-col gap-2 bg-[#383838] pt-3 pr-[22px]">
          <PropRows title="位置" values={['7.2555 mm', '0.44309 mm', '0.78818 mm']} />
          <PropRows title="回転" values={['0°', '0°', '0°']} />
          <div className="flex items-center h-[29px]">
            <span className="flex-1 text-right pr-3.5">モード</span>
            <div className="flex h-7 rounded-[5px] bg-[#2b2b2b] border border-[#404040]">
              <SelectBox label="モード" value="XYZ オイラー角" className="w-36 pl-2.5" />
            </div>
            <span className="ml-[42px] size-1.5 rounded-full bg-[#d8d8d8]" />
          </div>
          <PropRows title="スケール" values={['0.002', '0.0007', '0.003']} />
          <button type="button" className="flex items-center h-8 mt-2 pl-[33px]">
            <Triangle />
            <span className="ml-3">デルタトランスフォーム</span>
          </button>
        </div>
        {closedPanels.map((p) => (
          <h2 key={p} className="flex items-center h-9 pl-[13px] pr-3 text-lg">
            <Triangle />
            <span className="ml-2.5 pt-0.5">{p}</span>
            <span className="ml-auto"><Grip /></span>
          </h2>
        ))}
      </div>
    </div>
  </section>
);

const StatusBar = () => (
  <footer className="flex items-center h-[27px] bg-[#303030] pl-3.5 pr-6 text-[#a8a8a8]">
    {['M12 1.500H8.500C6 1.500 5 3.500 5 5.500V11h7z', 'M11 5h2v6h-2z', 'M12 1.500h3.500c2.500 0 3.500 2 3.500 4V11h-7z'].map((d) => (
      <div key={d} className="w-[387px]">
        <Icon><rect x="4.500" y="1.500" width="15" height="21.500" rx="4" /><path d={d} fill="currentColor" stroke="none" /></Icon>
      </div>
    ))}
    <span className="ml-auto">2.91.0</span>
  </footer>
);

const App: React.FC = () => (
  <div className="min-h-screen flex flex-col bg-[#202020] text-base text-[#dcdcdc] leading-6 [text-shadow:0_1px_1px_rgba(0,0,0,0.5)] font-['DejaVu_Sans','Noto_Sans_CJK_JP',sans-serif]">
    <TitleBar />
    <TopBar />
    <main className="flex-1 flex gap-[3px] px-0.5">
      <div className="flex-1 min-w-0 flex flex-col gap-[3px]">
        <Viewport />
        <Timeline />
      </div>
      <div className="w-[388px] shrink-0 flex flex-col gap-[3px]">
        <Outliner />
        <Properties />
      </div>
    </main>
    <div className="h-px" />
    <StatusBar />
    <div className="flex h-0.5 pl-[735px]"><span className="w-[54px] bg-[#4a4a4a]" /></div>
  </div>
);

export default App;
